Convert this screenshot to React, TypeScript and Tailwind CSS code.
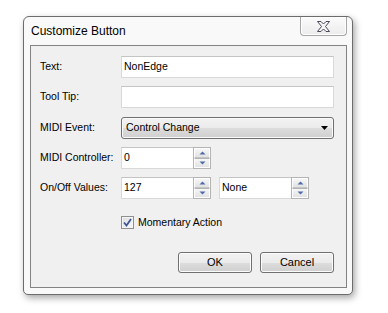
import React from 'react';

const font = { fontFamily: '"Liberation Sans", Arial, sans-serif' };

function TextField({ value }: { value: string }) {
  return (
    <div className="h-[22px] w-full bg-white border border-[#d9d9d9] border-t-[#c4c4c4] flex items-center pl-[2px] text-[10.5px] text-black">
      {value}
    </div>
  );
}

function SpinArrow({ up }: { up?: boolean }) {
  return (
    <svg width="7" height="4" viewBox="0 0 7 4">
      <path d={up ? 'M0.5 3.5 L3.5 0.5 L6.5 3.5 Z' : 'M0.5 0.5 L3.5 3.5 L6.5 0.5 Z'} fill="#4e6aa8" />
    </svg>
  );
}

function Spinner({ value }: { value: string }) {
  return (
    <div className="flex h-[22px] w-[90px]">
      <div className="flex-1 bg-white border border-r-0 border-[#d9d9d9] border-t-[#c4c4c4] flex items-center pl-[2px] text-[10.5px] text-black">
        {value}
      </div>
      <div className="w-[18px] flex flex-col border border-[#b4b4b4] bg-[#e8e8e8]">
        <div className="flex-1 flex items-center justify-center border border-white border-b-[#c4c4c4] bg-gradient-to-b from-[#f6f6f6] to-[#e2e2e2]">
          <SpinArrow up />
        </div>
        <div className="flex-1 flex items-center justify-center border border-white border-t-[#b4b4b4] bg-gradient-to-b from-[#f6f6f6] to-[#e2e2e2]">
          <SpinArrow />
        </div>
      </div>
    </div>
  );
}

function PushButton({ label }: { label: string }) {
  return (
    <button
      type="button"
      className="w-[74px] h-[21px] rounded-[3px] border border-[#707070] text-[11px] text-black bg-[linear-gradient(to_bottom,#f2f2f2_0%,#ebebeb_50%,#dddddd_51%,#cfcfcf_100%)] shadow-[inset_0_0_0_1px_#fcfcfc]"
    >
      {label}
    </button>
  );
}

function Label({ children }: { children: React.ReactNode }) {
  return <div className="h-[22px] flex items-center text-[10.5px] text-black">{children}</div>;
}

export default function App() {
  return (
    <div className="w-[388px] h-[313px] bg-white pl-[23px] pt-[16px]" style={font}>
      <div className="w-[330px] h-[279px] flex flex-col border border-[#6c6c6c] rounded-t-[6px] rounded-b-[5px] bg-[#f9f9f9] shadow-[2px_3px_7px_rgba(0,0,0,0.35)]">
        {/* title bar */}
        <div className="h-[28px] flex items-start">
          <div className="pl-[7px] pt-[6px] text-[12px] text-black leading-[16px]">Customize Button</div>
          <div className="ml-auto mr-[5px] w-[47px] h-[19px] rounded-b-[4px] border border-t-0 border-[#a6a6a6] bg-gradient-to-b from-[#fbfbfb] to-[#ececec] shadow-[inset_0_0_0_1px_#ffffff] flex items-center justify-center">
            <svg width="15" height="11" viewBox="0 0 15 11">
              <path
                d="M1.5 0.5 H5 L7.5 3 L10 0.5 H13.5 L9.5 5.5 L13.5 10.5 H10 L7.5 8 L5 10.5 H1.5 L5.5 5.5 Z"
                fill="#f4f4f4"
                stroke="#4a4a58"
                strokeWidth="1"
                strokeLinejoin="round"
              />
            </svg>
          </div>
        </div>

        {/* client area */}
        <div className="flex-1 ml-[6px] mr-[5px] mb-[6px] border border-[#838383] bg-[#f0f0f0] pl-[9px] pr-[12px] pt-[10px]">
          <div className="grid grid-cols-[81px_213px]">
            <Label>Text:</Label>
            <TextField value="NonEdge" />

            <div className="mt-[8px]"><Label>Tool Tip:</Label></div>
            <div className="mt-[8px]"><TextField value="" /></div>

            <div className="mt-[9px]"><Label>MIDI Event:</Label></div>
            <div className="mt-[9px] h-[22px] rounded-[3px] border border-[#707070] bg-[linear-gradient(to_bottom,#f2f2f2_0%,#ebebeb_50%,#dddddd_51%,#cfcfcf_100%)] shadow-[inset_0_0_0_1px_#fafafa] flex items-center pl-[4px] pr-[5px] text-[10.5px] text-black">
              <span>Control Change</span>
              <svg className="ml-auto" width="7" height="4" viewBox="0 0 7 4">
                <path d="M0 0 H7 L3.5 4 Z" fill="#000" />
              </svg>
            </div>

            <div className="mt-[8px]"><Label>MIDI Controller:</Label></div>
            <div className="mt-[8px]"><Spinner value="0" /></div>

            <div className="mt-[8px]"><Label>On/Off Values:</Label></div>
            <div className="mt-[8px] flex gap-[8px]">
              <Spinner value="127" />
              <Spinner value="None" />
            </div>

            <div />
            <div className="mt-[17px] h-[13px] flex items-center gap-[4px] text-[10.5px] text-black">
              <div className="w-[13px] h-[13px] border border-[#8e8f8f] bg-gradient-to-br from-[#dcdcdc] to-[#fbfbfb] shadow-[inset_0_0_0_1px_#f4f4f4] flex items-center justify-center">
                <svg width="9" height="9" viewBox="0 0 9 9">
                  <path d="M1 4.5 L3.5 7.5 L8 1" fill="none" stroke="#3c5596" strokeWidth="1.8" />
                </svg>
              </div>
              <span>Momentary Action</span>
            </div>
          </div>

          <div className="mt-[23px] flex justify-end gap-[8px]">
            <PushButton label="OK" />
            <PushButton label="Cancel" />
          </div>
        </div>
      </div>
    </div>
  );
}
